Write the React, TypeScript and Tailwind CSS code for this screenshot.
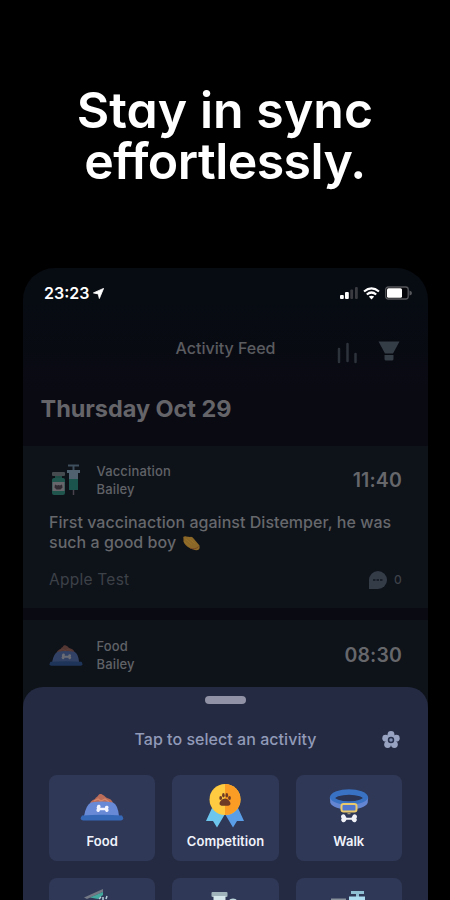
import React from "react";

function BowlIcon({ className }: { className?: string }) {
  return (
    <svg viewBox="0 0 44 30" className={className}>
      <path d="M10 12 C10 8 13 7 15 6 C16 4 17 4 18 3 C19 0 22 1 23 2 C25 3 25 4 27 5 C31 6 33 8 33 12 Z" fill="#bc6d59" />
      <path d="M14 8 l4-2 l3 2 l4-2 l4 3" fill="none" stroke="#d5876b" strokeWidth="1.2" />
      <path d="M11 9.500 Q22 7.500 33 9.500 Q38 12 39 23 H4 Q6 12 11 9.500Z" fill="#6789d6" />
      <path d="M2 22.500 Q22 21 42 22.500 Q45 27 41 27.500 H3 Q-1 27 2 22.500Z" fill="#3668b8" />
      <path d="M17 13.6 a1.8 1.8 0 1 1 3 1.2 h5 a1.8 1.8 0 1 1 3 1 a1.8 1.8 0 1 1-3 1.5 h-5 a1.8 1.8 0 1 1-3-1.5 a1.8 1.8 0 0 1 0-2.2Z" fill="#f2f4ff" />
    </svg>
  );
}

function MedalIcon() {
  return (
    <svg viewBox="0 0 40 46" className="h-[46px] w-10">
      <path d="M7 25 L1 38 L8 38 L12 44.500 L20 31Z" fill="#6dc6ee" />
      <path d="M33 25 L39 38 L32 38 L28 44.500 L20 31Z" fill="#5a9ee8" />
      <circle cx="20" cy="16.5" r="15.5" fill="#ffcb41" />
      <path d="M20 1 a15.5 15.5 0 0 1 0 31Z" fill="#fb9d24" />
      <g fill="#703b25">
        <ellipse cx="15.700" cy="15" rx="1.400" ry="2" />
        <ellipse cx="18.400" cy="12.300" rx="1.300" ry="2.200" />
        <ellipse cx="21.800" cy="12.300" rx="1.300" ry="2.200" />
        <ellipse cx="24.500" cy="15" rx="1.400" ry="2" />
        <path d="M20 15.5 c2.5 0 5.500 3 5.500 5 c0 2.7-3 2.200-5.500 2.200 s-5.500 .5-5.500-2.200 c0-2 3-5 5.500-5Z" />
      </g>
    </svg>
  );
}

function CollarIcon() {
  return (
    <svg viewBox="0 0 40 36" className="mt-0.5 h-9 w-10">
      <ellipse cx="20" cy="9" rx="16.500" ry="6" fill="#2b3452" stroke="#3971c3" strokeWidth="5.500" />
      <path d="M1.200 9 C4 18 36 18 38.800 9 V13.500 C36 23 4 23 1.200 13.500Z" fill="#6485d2" />
      <rect x="12.500" y="15" width="15" height="7.500" rx="2" fill="#5277cc" stroke="#e9c96b" strokeWidth="2" />
      <path d="M18.500 24.500 H21.500" stroke="#a89a76" strokeWidth="1.500" />
      <path d="M12 27.500 a2.300 2.300 0 0 1 4.500-.5 l1 1.800 h5 l1-1.800 a2.300 2.300 0 1 1 3.800 2.300 a2.400 2.400 0 1 1-3.800 3 l-1-1.500 h-5 l-1 1.500 a2.400 2.400 0 1 1-3.800-3 q-.7-.7-.7-1.800Z" fill="#f1f2f8" />
    </svg>
  );
}

function VaccineIcon() {
  return (
    <svg viewBox="0 0 28 32" className="h-8 w-7">
      <rect x="0" y="8" width="13" height="4" rx="1" fill="#464b50" />
      <rect x="3" y="12" width="7" height="3" fill="#204c46" />
      <rect x="0" y="14" width="13" height="17" rx="2" fill="#20554e" />
      <rect x="0.500" y="18" width="12" height="9" fill="#67666a" />
      <path d="M3 20.500 l2 1 1.500-.5 1.500.5 2-1 .5 3-2 2 h-4 l-2-2Z" fill="#302a32" />
      <path d="M16 1.500 H27 M21.500 1 V6" stroke="#3e4f5e" strokeWidth="2" />
      <path d="M15 6 H28 V9 H26 V16 H17 V9 H15Z" fill="#50626f" />
      <path d="M17 15 H26 V26 H17Z" fill="#1b534d" />
      <path d="M21.500 26 V31" stroke="#4a434d" strokeWidth="1.500" />
    </svg>
  );
}

function StatusIcons() {
  return (
    <div className="flex items-center gap-[5px]">
      <svg viewBox="0 0 20 14" className="h-3.5 w-5">
        <rect x="2" y="9" width="3.800" height="4" rx="1" fill="#fff" />
        <rect x="7" y="6" width="3.800" height="7" rx="1" fill="#fff" />
        <rect x="12.300" y="3.500" width="2.800" height="9.500" rx="1" fill="#393b40" />
        <rect x="17" y="1" width="2.800" height="12" rx="1" fill="#393b40" />
      </svg>
      <svg viewBox="0 0 17 13" className="h-[13px] w-[17px]" fill="none" stroke="#fff" strokeWidth="2.200">
        <path d="M1 4.500 Q8.500-1.700 16 4.500" />
        <path d="M3.800 7.500 Q8.500 3.500 13.200 7.500" />
        <path d="M5.800 9.600 Q8.500 7.800 11.200 9.600 L8.500 12.500Z" fill="#fff" stroke="none" />
      </svg>
      <svg viewBox="0 0 27 14" className="h-3.5 w-[27px]">
        <rect x=".7" y="1" width="22.500" height="12" rx="2.500" fill="#050609" stroke="#55575b" strokeWidth="1.300" />
        <rect x="2" y="2.200" width="15" height="9.600" rx="1.500" fill="#fff" />
        <path d="M24.500 4.500 Q27 5 27 7 T24.500 9.500Z" fill="#55575b" />
      </svg>
    </div>
  );
}

function FlowerIcon() {
  return (
    <svg viewBox="0 0 20 20" className="h-5 w-5">
      <g fill="#98a3c2">
        <circle cx="10" cy="4.300" r="3.400" />
        <circle cx="15.300" cy="8.200" r="3.400" />
        <circle cx="13.400" cy="14.500" r="3.400" />
        <circle cx="6.600" cy="14.500" r="3.400" />
        <circle cx="4.700" cy="8.200" r="3.400" />
        <circle cx="10" cy="10" r="5" />
      </g>
      <circle cx="10" cy="10" r="2.500" fill="#8390b4" stroke="#27304c" strokeWidth="1.500" />
    </svg>
  );
}

function EntryHeader({ icon, title, time }: { icon: React.ReactNode; title: string; time: string }) {
  return (
    <div className="flex h-9 items-center">
      <div className="flex w-[47.500px] items-center">{icon}</div>
      <div className="text-[13px] font-medium leading-[18px] tracking-[0.15px] text-[#606267]">
        <div>{title}</div>
        <div>Bailey</div>
      </div>
      <div className="ml-auto pt-[2px] text-[19.500px] font-semibold tracking-[0.15px] text-[#66676b]">{time}</div>
    </div>
  );
}

function Tile({ icon, label }: { icon: React.ReactNode; label?: string }) {
  return (
    <div className="flex h-[86px] flex-col items-center rounded-lg bg-[#2f3856]">
      <div className="flex h-[58px] items-center pt-1">{icon}</div>
      {label && <div className="text-[13px] font-semibold leading-[17px] tracking-[0.05px] text-[#f0f2fb]">{label}</div>}
    </div>
  );
}

export default function App() {
  return (
    <main className="flex h-[900px] w-[450px] flex-col overflow-hidden bg-black font-['Inter',sans-serif]">
      <h1 className="h-[268px] shrink-0 pt-[85px] text-center text-[50px] font-semibold leading-[51px] text-white [font-feature-settings:'cv11']">
        <span className="block tracking-[0.05px]">Stay in sync</span>
        <span className="block tracking-[-0.55px]">effortlessly.</span>
      </h1>
      <section className="ml-[23px] flex h-[632px] w-[405px] shrink-0 flex-col overflow-hidden rounded-t-[32px] bg-linear-to-b from-[#070b12] from-5% to-[#0a0a13] to-20%">
        <div className="flex h-[50px] shrink-0 items-center justify-between pl-[21px] pr-4">
          <div className="flex items-center gap-1 text-[16px] font-semibold text-white">
            23:23
            <svg viewBox="0 0 13 13" className="h-[11px] w-[11px]"><path d="M12.500.5 L7.500 12.500 L6.200 7 L.5 5.800Z" fill="#fff" stroke="#fff" /></svg>
          </div>
          <StatusIcons />
        </div>
        <div className="grid h-[60px] shrink-0 grid-cols-[100px_205px_100px] items-center">
          <div className="col-start-2 text-center text-base font-medium text-[#5b5c60]">Activity Feed</div>
          <div className="flex items-center gap-[20px] pl-[9px] pt-1.5">
            <svg viewBox="0 0 21 22" className="mt-1 h-[22px] w-[21px]" stroke="#2c333b" strokeWidth="2.500" strokeLinecap="round">
              <path d="M2 7 V20 M10.500 2 V19 M18.500 12 V20" />
            </svg>
            <svg viewBox="0 0 22 20" className="h-5 w-[22px]" fill="#343c45">
              <path d="M.5 .5 H21.500 L15 12.500 H7Z M6.500 14 H15.500 V18 Q15.500 19.500 14 19.500 H8 Q6.500 19.500 6.500 18Z" />
            </svg>
          </div>
        </div>
        <h2 className="h-[68px] shrink-0 pl-[17.500px] pt-[15px] text-[23.500px] font-bold leading-[32px] tracking-[-0.05px] text-[#656569]">Thursday Oct 29</h2>
        <article className="h-[162px] shrink-0 bg-[#0e1219] px-[26px] pt-4">
          <EntryHeader icon={<div className="pl-[3px]"><VaccineIcon /></div>} title="Vaccination" time="11:40" />
          <p className="mt-[15px] text-base font-medium leading-[19.500px] tracking-[0.04px] text-[#66686c]">
            First vaccinaction against Distemper, he was<br />such a good boy{" "}
            <svg viewBox="0 0 20 18" className="ml-[1px] inline-block h-[17px] w-5 align-[-4px]">
              <path d="M2 4 Q1 1 5 1.500 L9 2 Q11 1 13 4 L19 11 Q20 17 14 16 L9 14 Q3 11 2 7Z" fill="#8b6728" />
              <path d="M4 4 L11 10 M7 3 L14 9 M3 7 L9 12" stroke="#997329" strokeWidth="1" />
              <path d="M9 14 Q15 16 18 12" stroke="#754523" fill="none" />
            </svg>
          </p>
          <div className="mt-[18px] flex h-5 items-center justify-between text-[15.500px] tracking-[0.25px] text-[#3d4148]">
            <span>Apple Test</span>
            <span className="flex items-center gap-[6px] text-[12px]">
              <svg viewBox="0 0 20 20" className="h-5 w-5"><path d="M1 19 V10 A9 9 0 1 1 10 19Z" fill="#343c48" /><path d="M5 10 H15" stroke="#1a202a" strokeWidth="2" strokeDasharray="2.500 1" /></svg>
              <span className="font-medium">0</span>
            </span>
          </div>
        </article>
        <article className="mt-[12px] h-[67px] shrink-0 bg-[#0e1219] px-[26px] pt-[17px]">
          <EntryHeader icon={<BowlIcon className="mt-[2px] h-[24px] w-[34px] opacity-40" />} title="Food" time="08:30" />
        </article>
        <div className="flex grow flex-col bg-[#0e1219]">
          <div className="flex grow flex-col rounded-t-[20px] bg-[#242a41] px-[26px] pt-[9px]">
            <div className="mx-auto h-2 w-[41px] shrink-0 rounded-full bg-[#9292a6]" />
            <div className="mt-[23px] grid h-6 shrink-0 grid-cols-[30px_1fr_30px] items-center">
              <div className="col-start-2 text-center text-base font-medium tracking-[0.04px] text-[#919ab8]">Tap to select an activity</div>
              <div className="flex justify-center pl-2 pt-0.5"><FlowerIcon /></div>
            </div>
            <div className="mt-[24px] grid shrink-0 grid-cols-3 gap-[17px]">
              <Tile icon={<BowlIcon className="mt-1 h-[30px] w-11" />} label="Food" />
              <Tile icon={<MedalIcon />} label="Competition" />
              <Tile icon={<CollarIcon />} label="Walk" />
              <Tile icon={<svg viewBox="0 0 44 40" className="-mt-1 h-10 w-11"><path d="M4 10.500 L23 2 V5 L7 12Z" fill="#737985" /><path d="M10 10.500 L23 5 V8 L18 12Z" fill="#43a99e" /><path d="M19 12 l2-2 M23 13 v-3 M26 12 l1-3" stroke="#b8cedb" strokeWidth="1.500" /></svg>} />
              <Tile icon={<svg viewBox="0 0 44 40" className="-mt-1 h-10 w-11"><rect x="8.500" y="5" width="16" height="5" rx="1" fill="#9fb3bb" /><path d="M10.500 9 H22.500 V35 H10.500Z" fill="#d6e7ec" /><ellipse cx="30" cy="14" rx="4" ry="2.500" fill="#bdd5dc" /></svg>} />
              <Tile icon={<svg viewBox="0 0 44 40" className="-mt-1 h-10 w-11"><path d="M4 11.500 H19 V16 H4Z" fill="#89919b" /><path d="M24 5.500 H37 M30.500 5 V12" stroke="#8fbfd2" strokeWidth="3" /><path d="M22 9.500 H38 V20 H22Z" fill="#abdcf0" /></svg>} />
            </div>
          </div>
        </div>
      </section>
    </main>
  );
}
